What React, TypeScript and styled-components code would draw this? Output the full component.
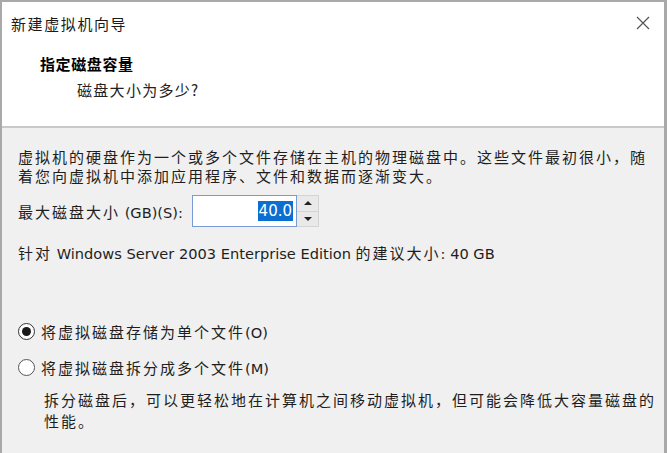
import React from 'react'
import styled, { createGlobalStyle } from 'styled-components'

const GlobalStyle = createGlobalStyle`
    html, body {
        margin: 0;
        padding: 0;
        background: #f0f0f0;
    }
    body {
        font-family: "Noto Sans CJK SC", "DejaVu Sans", sans-serif;
    }
`

const Window = styled.div`
    width: 667px;
    height: 453px;
    box-sizing: border-box;
    border-top: 2px solid #a9a9a9;
    border-left: 2px solid #a9a9a9;
    border-right: 3px solid #a9a9a9;
    background: #f0f0f0;
    display: flex;
    flex-direction: column;
    overflow: hidden;
`

const Header = styled.div`
    background: #fff;
    height: 124px;
    border-bottom: 2px solid #c9c9c9;
    display: flex;
    flex-direction: column;
`

const TitleBar = styled.div`
    height: 42px;
    display: flex;
    align-items: center;
    justify-content: space-between;
    padding: 0 14px 0 9px;
`

const Title = styled.div`
    font-size: 15px;
    letter-spacing: 1.6px;
    color: #1a1a1a;
`

const Close = styled.div`
    width: 14px;
    height: 14px;
    display: flex;
`

const Heading = styled.div`
    margin: 10px 0 0 38px;
    height: 20px;
    line-height: 20px;
    font-size: 15px;
    font-weight: 700;
    letter-spacing: 0.6px;
    color: #000;
`

const SubHeading = styled.div`
    margin: 6px 0 0 75px;
    height: 20px;
    line-height: 20px;
    font-size: 15px;
    letter-spacing: 1.3px;
    color: #222;
`

const Body = styled.div`
    padding: 19px 0 0 16px;
    display: flex;
    flex-direction: column;
    color: #1e1e1e;
    font-size: 15px;
    letter-spacing: 2px;
`

const Para = styled.div<{ $width: number }>`
    width: ${p => p.$width}px;
    line-height: 19px;
`

const Latin = styled.span`
    font-family: "DejaVu Sans", sans-serif;
    font-size: 14.6px;
    letter-spacing: 0;
`

const SizeRow = styled.div`
    margin-top: 10px;
    height: 32px;
    display: flex;
    align-items: center;
`

const Label = styled.div`
    width: 174px;
    white-space: nowrap;
`

const Spin = styled.div`
    display: flex;
    height: 32px;
`

const Field = styled.div`
    width: 105px;
    box-sizing: border-box;
    border: 1px solid #7a9ad6;
    background: #fff;
    display: flex;
    align-items: center;
    justify-content: flex-end;
    padding-right: 3px;
`

const Selected = styled.span`
    background: #0a6fd1;
    color: #fff;
    font-family: "DejaVu Sans", sans-serif;
    font-size: 15px;
    letter-spacing: 0;
    line-height: 20px;
    padding: 0 1px;
`

const Arrows = styled.div`
    width: 22px;
    display: flex;
    flex-direction: column;
    border: 1px solid #d4d4d4;
    border-left: none;
    box-sizing: border-box;
`

const ArrowBtn = styled.div<{ $down?: boolean }>`
    flex: 1;
    display: flex;
    align-items: center;
    justify-content: center;
    background: #e9e9e9;
    border-top: ${p => (p.$down ? '1px solid #d4d4d4' : 'none')};
    &::after {
        content: '';
        border-left: 4px solid transparent;
        border-right: 4px solid transparent;
        ${p => (p.$down ? 'border-top: 4px solid #222;' : 'border-bottom: 4px solid #222;')}
    }
`

const Recommend = styled.div`
    margin-top: 16px;
    line-height: 19px;
    white-space: nowrap;
`

const RadioRow = styled.div<{ $gap: number }>`
    margin-top: ${p => p.$gap}px;
    height: 24px;
    display: flex;
    align-items: center;
    gap: 6px;
`

const RadioCircle = styled.div<{ $checked?: boolean }>`
    width: 17px;
    height: 17px;
    box-sizing: border-box;
    border-radius: 50%;
    border: 1px solid ${p => (p.$checked ? '#333' : '#555')};
    background: #fff;
    display: flex;
    align-items: center;
    justify-content: center;
    &::after {
        content: '';
        width: 9px;
        height: 9px;
        border-radius: 50%;
        background: ${p => (p.$checked ? '#1a1a1a' : 'transparent')};
    }
`

const Desc = styled.div`
    margin: 10px 0 0 26px;
    line-height: 21px;
    letter-spacing: 2px;
    white-space: nowrap;
`

const App = () => {
    return (
        <>
            <GlobalStyle />
            <Window>
                <Header>
                    <TitleBar>
                        <Title>新建虚拟机向导</Title>
                        <Close>
                            <svg width="14" height="14" viewBox="0 0 14 14">
                                <path d="M1 1 L13 13 M13 1 L1 13" stroke="#555" strokeWidth="1.2" fill="none" />
                            </svg>
                        </Close>
                    </TitleBar>
                    <Heading>指定磁盘容量</Heading>
                    <SubHeading>磁盘大小为多少?</SubHeading>
                </Header>
                <Body>
                    <Para $width={634}>
                        虚拟机的硬盘作为一个或多个文件存储在主机的物理磁盘中。这些文件最初很小，随着您向虚拟机中添加应用程序、文件和数据而逐渐变大。
                    </Para>
                    <SizeRow>
                        <Label>最大磁盘大小<Latin> (GB)(S):</Latin></Label>
                        <Spin>
                            <Field>
                                <Selected>40.0</Selected>
                            </Field>
                            <Arrows>
                                <ArrowBtn />
                                <ArrowBtn $down />
                            </Arrows>
                        </Spin>
                    </SizeRow>
                    <Recommend>
                        针对<Latin> Windows Server 2003 Enterprise Edition </Latin>的建议大小<Latin>: 40 GB</Latin>
                    </Recommend>
                    <RadioRow $gap={56}>
                        <RadioCircle $checked />
                        <span>将虚拟磁盘存储为单个文件<Latin>(O)</Latin></span>
                    </RadioRow>
                    <RadioRow $gap={12}>
                        <RadioCircle />
                        <span>将虚拟磁盘拆分成多个文件<Latin>(M)</Latin></span>
                    </RadioRow>
                    <Desc>
                        拆分磁盘后，可以更轻松地在计算机之间移动虚拟机，但可能会降低大容量磁盘的<br />
                        性能。
                    </Desc>
                </Body>
            </Window>
        </>
    )
}

export default App
